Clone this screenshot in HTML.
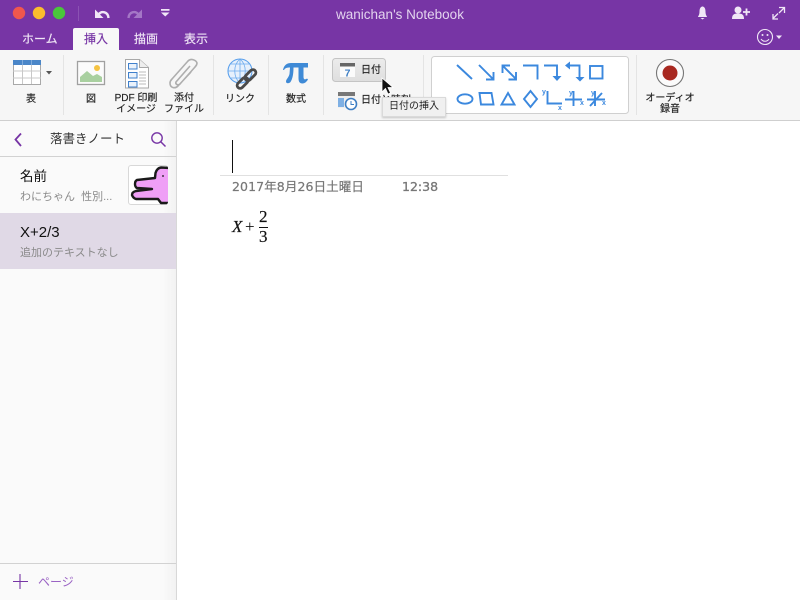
<!DOCTYPE html>
<html><head><meta charset="utf-8"><style>
html,body{margin:0;padding:0}
body{width:800px;height:600px;position:relative;overflow:hidden;background:#fff;font-family:"Liberation Sans","Noto Sans CJK JP",sans-serif}
.a{position:absolute;white-space:nowrap}
.c{position:absolute;text-align:center;white-space:nowrap;font-size:10px;line-height:11px;color:#222;-webkit-text-stroke:.15px #222}
.sep{position:absolute;top:55px;height:60px;width:1px;background:#e4e4e4}
.tab{position:absolute;top:31px;font-size:12px;line-height:16px;color:#f0e6f6;-webkit-text-stroke:.15px #f0e6f6}
svg{position:absolute;overflow:visible}
</style></head><body>
<div class="a" style="left:0;top:0;width:800px;height:50px;background:#7735a5"></div>
<div class="a" style="left:0;top:50px;width:800px;height:70px;background:#f6f6f6"></div>
<div class="a" style="left:0;top:120px;width:800px;height:1px;background:#cfcfcf"></div>

<!-- title bar -->
<svg style="left:0;top:0" width="800" height="50">
<circle cx="19" cy="13" r="6.200" fill="#f0574e"/><circle cx="39" cy="13" r="6.200" fill="#fbbd2e"/><circle cx="59" cy="13" r="6.200" fill="#4ac63c"/>
<line x1="78.500" y1="6" x2="78.500" y2="21" stroke="#8b52b3"/>
<path d="M95 9.500v8.500h8.500z" fill="#f0e6f6"/>
<path d="M98.500 14.500c3-4 9.500-3 10 3.500" fill="none" stroke="#f0e6f6" stroke-width="2.400"/>
<path d="M142 9.500v8.500h-8.500z" fill="#a477c6"/>
<path d="M138.500 14.500c-3-4-9.500-3-10 3.500" fill="none" stroke="#a477c6" stroke-width="2.400"/>
<path d="M161 9h8.500v1.800h-8.500zM161 12.500h8.500l-4.250 4z" fill="#f0e6f6"/>
<path d="M698 17c0-1 1.500-1.500 1.500-5.500s2-5 3-5 3 1 3 5 1.500 4.500 1.500 5.500zM700.500 18h4l-2 1.500z" fill="#f0e6f6"/>
<circle cx="738" cy="10" r="3.500" fill="#f0e6f6"/><path d="M732 19c0-4.500 2-5.500 6-5.500s6 1 6 5.500z" fill="#f0e6f6"/>
<path d="M743 12h7M746.500 8.500v7" stroke="#f0e6f6" stroke-width="1.800"/>
<g stroke="#f0e6f6" stroke-width="1.300" fill="none"><path d="M773 18.500l5-5M773 14v5h5M784 8l-5 5M779 7.500h5.500v5.500"/></g>
<circle cx="765" cy="37" r="7.500" fill="none" stroke="#f0e6f6" stroke-width="1.100"/>
<circle cx="762.500" cy="35" r="1" fill="#f0e6f6"/><circle cx="767.500" cy="35" r="1" fill="#f0e6f6"/>
<path d="M761 39c2 3 6 3 8 0" fill="none" stroke="#f0e6f6" stroke-width="1.100"/>
<path d="M776 35.500h6l-3 3.500z" fill="#f0e6f6"/>
</svg>
<div class="a" style="left:260px;width:280px;top:7px;text-align:center;font-size:13.500px;line-height:16px;color:#e3d3ee">wanichan's Notebook</div>
<div class="tab" style="left:22px">ホーム</div>
<div class="a" style="left:73px;top:28px;width:46px;height:22px;background:#f8f8f8;border-radius:2px 2px 0 0"></div>
<div class="tab" style="left:84px;color:#7735a5;-webkit-text-stroke:.15px #7735a5">挿入</div>
<div class="tab" style="left:134px">描画</div>
<div class="tab" style="left:184px">表示</div>

<!-- separators -->
<div class="sep" style="left:63px"></div><div class="sep" style="left:213px"></div><div class="sep" style="left:268px"></div><div class="sep" style="left:323px"></div><div class="sep" style="left:423px"></div><div class="sep" style="left:636px"></div>

<!-- ribbon icons -->
<svg style="left:0;top:0" width="800" height="125">
<!-- table -->
<rect x="13.500" y="60.500" width="27" height="24" fill="#fff" stroke="#a8a8a8"/>
<path d="M13 71h28M13 78h28M22.500 65v19M31.500 65v19" stroke="#c8c8c8"/>
<rect x="13" y="60" width="28" height="5" fill="#4a86c8"/>
<path d="M22.500 60v5M31.500 60v5" stroke="#7fabdc"/>
<path d="M46 71h6l-3 3.500z" fill="#555"/>
<!-- picture -->
<rect x="77.500" y="61.500" width="27" height="23" fill="#fbfbfb" stroke="#a0a0a0" stroke-width="1.300"/>
<path d="M80 82v-5l7-6 6 5 4-2 5 3v5z" fill="#a9d0a0"/>
<circle cx="97" cy="68" r="3" fill="#f5c342"/>
<!-- pdf -->
<path d="M125.500 59.500h14l9 8v20.500h-23z" fill="#fff" stroke="#a8a8a8"/>
<path d="M139.500 59.500v8h9" fill="#eee" stroke="#a8a8a8"/>
<path d="M128.500 63.500h8.500v5.500h-8.500zM128.500 72.500h8.500v5.500h-8.500zM128.500 81.500h8.500v5.500h-8.500z" fill="#eaf2fb" stroke="#3f80cc"/>
<path d="M139 72h7M139 75h7M139 78h7M139 81h7M139 84h7" stroke="#bbb"/>
<!-- clip -->
<path d="M191 72L178 86c-3 3-8 2-8-3 0-2 1-3 2-4L188 61c3-3 8-1 9 2 0 2-1 3-2 4L180 84c-2 2-5 0-4-2L190 66" fill="none" stroke="#aeaeae" stroke-width="1.600"/>
<!-- link -->
<circle cx="240" cy="71" r="12" fill="#e6f0fc" stroke="#5aa0ec" stroke-width="1.100"/>
<path d="M228 71h24M240 59v24M231 64h18M231 78h18M240 59c-7 6-7 18 0 24M240 59c7 6 7 18 0 24" fill="none" stroke="#6cabee" stroke-width=".8"/>
<g transform="translate(246.500,79) rotate(-45)" fill="none" stroke="#4a4a4a" stroke-width="2.800"><rect x="-12" y="-3" width="13" height="6" rx="3"/><rect x="-1" y="-3" width="13" height="6" rx="3"/></g>
<!-- pi -->
<path d="M283 70C284 65 287 63 291 63H308V67.500H303.500V77C303.500 79.500 305 80 307 78.500L308 79.500C306.500 82 304.500 83.500 302.500 83.500 299.500 83.500 298.500 81.500 298.500 78V67.500H293.500C293.500 74 292.500 79 290.500 82 289.500 83.500 286 84 286 81.500 286 79 288.500 78 289.500 74L290 67.500C287 67.500 285 68 284 70Z" fill="#3f8ad6"/>
<!-- date button -->
<defs><linearGradient id="g" x1="0" y1="0" x2="0" y2="1"><stop offset="0" stop-color="#ececec"/><stop offset="1" stop-color="#dedede"/></linearGradient></defs>
<rect x="332.500" y="58.500" width="53" height="23" rx="3" fill="url(#g)" stroke="#c4c4c4"/>
<rect x="340" y="63" width="15" height="14" fill="#fbfbfb"/><rect x="340" y="63" width="15" height="3.500" fill="#666"/>
<text x="347.500" y="76.500" font-size="10.500" font-weight="bold" text-anchor="middle" fill="#3f7fc4" font-family="Liberation Sans">7</text>
<!-- datetime -->
<rect x="338" y="92" width="17" height="16" fill="#eee"/><rect x="338" y="92" width="17" height="4" fill="#777"/>
<path d="M338 98h6v9h-6z" fill="#7fb0e4"/>
<circle cx="351" cy="104" r="5.500" fill="#fff" stroke="#3f7fc4" stroke-width="1.600"/>
<path d="M351 101v3.500h3" fill="none" stroke="#3f7fc4"/>
<!-- shapes box -->
<rect x="431.500" y="56.500" width="197" height="57" rx="3" fill="#fff" stroke="#d0d0d0"/>
<g fill="none" stroke="#3b88de" stroke-width="1.900">
<path d="M457 65l15 14"/>
<path d="M479 65l13.500 13.500M493.500 72v7.500h-7.500"/>
<path d="M503 66l12.500 12.500M502.500 73v-7.500h7.500M516 72v7.500h-7.500"/>
<path d="M523 65.500h14.500v14"/>
<path d="M544 65.500h13v12"/>
<path d="M568 65.500h11.500v13"/>
<rect x="590" y="66" width="12.500" height="12.500"/>
<ellipse cx="465" cy="99" rx="7.500" ry="4.700"/>
<path d="M479.500 93h12l2 11.500h-12.500z"/>
<path d="M508 93l6.500 11.500h-13z"/>
<path d="M530.500 91l6.500 8-6.500 8-6.500-8z"/>
<path d="M547.500 91v12.500h14.500"/>
<path d="M565 99.500h17M573.500 91v15"/>
<path d="M587 99.500h18M595 91v15M590 106l12-13"/>
</g>
<g fill="#3b88de"><path d="M552.500 76h9l-4.500 5zM575.500 77h9l-4.500 4.500zM570 61.500v8l-5-4z"/></g>
<g font-size="7" font-weight="bold" fill="#3b88de" font-family="Liberation Sans"><text x="542" y="94">y</text><text x="558" y="110">x</text><text x="569" y="95">y</text><text x="580" y="105">x</text><text x="591" y="95">y</text><text x="602" y="105">x</text></g>
<!-- record -->
<circle cx="670" cy="73" r="13.500" fill="#fbfbfb" stroke="#777" stroke-width="1.100"/>
<circle cx="670" cy="73" r="7.500" fill="#a82820"/>
</svg>

<div class="c" style="left:11px;width:40px;top:94px">表</div>
<div class="c" style="left:71px;width:40px;top:94px">図</div>
<div class="c" style="left:110px;width:52px;top:93px">PDF 印刷<br>イメージ</div>
<div class="c" style="left:160px;width:48px;top:93px">添付<br>ファイル</div>
<div class="c" style="left:220px;width:40px;top:94px">リンク</div>
<div class="c" style="left:276px;width:40px;top:94px">数式</div>
<div class="c" style="left:361px;top:65px">日付</div>
<div class="c" style="left:361px;top:95px">日付と時刻</div>
<div class="c" style="left:640px;width:60px;top:93px">オーディオ<br>録音</div>

<!-- tooltip -->
<div class="a" style="left:382px;top:97px;width:62px;height:18px;background:#f0f0f0;border:1px solid #dadada;box-shadow:0 1px 2px rgba(0,0,0,.2);font-size:10px;line-height:18px;text-align:center;color:#222">日付の挿入</div>
<svg style="left:381px;top:77px" width="14" height="20"><path d="M1 1v14l3.500-3.500 2.500 5.500 2.500-1-2.500-5.500h5z" fill="#111" stroke="#fff" stroke-width=".8"/></svg>

<!-- sidebar -->
<div class="a" style="left:0;top:121px;width:176px;height:479px;background:linear-gradient(90deg,#fafafa 0,#fafafa 163px,#f2f2f2 176px);border-right:1px solid #d8d8d8"></div>
<div class="a" style="left:0;top:156px;width:176px;height:1px;background:#d2d2d2"></div>
<div class="a" style="left:0;top:213px;width:176px;height:56px;background:#e0d9e6"></div>
<div class="a" style="left:0;top:563px;width:176px;height:1px;background:#d2d2d2"></div>
<svg style="left:0;top:121px" width="176" height="36">
<path d="M21 12.500l-5.500 6 5.500 6.500" fill="none" stroke="#7735a5" stroke-width="1.800"/>
<circle cx="157" cy="17" r="5.200" fill="none" stroke="#7735a5" stroke-width="1.400"/>
<path d="M161 21l4.500 4.500" stroke="#7735a5" stroke-width="1.500"/>
</svg>
<div class="a" style="left:50px;top:131px;font-size:12.500px;line-height:16px;color:#333">落書きノート</div>
<div class="a" style="left:20px;top:169px;font-size:13.500px;line-height:16px;color:#111">名前</div>
<div class="a" style="left:20px;top:190px;font-size:11px;line-height:15px;color:#8a8a8a">わにちゃん&nbsp; 性別...</div>
<div class="a" style="left:20px;top:225px;font-size:15px;line-height:16px;color:#111">X+2/3</div>
<div class="a" style="left:20px;top:246px;font-size:11px;line-height:15px;color:#8a8a8a">追加のテキストなし</div>
<div class="a" style="left:128px;top:165px;width:38px;height:38px;background:#fff;border:1px solid #d8d8d8;border-radius:3px"></div>
<svg style="left:128px;top:165px;overflow:hidden;border-radius:3px" width="40" height="40">
<path d="M42 3L33 2.500Q29 3 27.500 8L27 13 9 15Q7 16 7 19 7 22 9 23L24 24 8 26Q4 27 4 30 5 33 8 34L30 34 33 38 38 38 42 38Z" fill="#ef9ff6" stroke="#1a1a1a" stroke-width="2.400" stroke-linejoin="round"/>
<circle cx="35" cy="11" r=".9" fill="#111"/>
</svg>
<svg style="left:12px;top:573px" width="18" height="18"><path d="M8 1v15M1 8.500h15" stroke="#7735a5" stroke-width="1.100"/></svg>
<div class="a" style="left:38px;top:574px;font-size:12px;line-height:16px;color:#9a63c4">ページ</div>

<!-- note -->
<div class="a" style="left:232px;top:140px;width:1px;height:33px;background:#111"></div>
<div class="a" style="left:220px;top:175px;width:288px;height:1px;background:#e0e0e0"></div>
<div class="a" style="left:232px;top:179px;font-family:'DejaVu Sans','Noto Sans CJK JP',sans-serif;font-size:12.500px;line-height:16px;letter-spacing:.1px;color:#777;-webkit-text-stroke:.2px #777">2017年8月26日土曜日</div>
<div class="a" style="left:402px;top:179px;font-family:'DejaVu Sans',sans-serif;font-size:12.500px;line-height:16px;color:#777;-webkit-text-stroke:.3px #777">12:38</div>
<div class="a" style="left:232px;top:218px;font-family:'Liberation Serif',serif;font-style:italic;font-size:17px;line-height:18px;color:#111;-webkit-text-stroke:.2px #111">X</div>
<div class="a" style="left:245px;top:218px;font-family:'Liberation Serif',serif;font-size:17px;line-height:18px;color:#111">+</div>
<div class="a" style="left:259px;top:208px;font-family:'Liberation Serif',serif;font-size:17px;line-height:18px;color:#111;-webkit-text-stroke:.2px #111">2</div>
<div class="a" style="left:259px;top:227px;width:8.500px;height:1px;background:#111"></div>
<div class="a" style="left:259px;top:228px;font-family:'Liberation Serif',serif;font-size:17px;line-height:18px;color:#111;-webkit-text-stroke:.2px #111">3</div>
</body></html>
